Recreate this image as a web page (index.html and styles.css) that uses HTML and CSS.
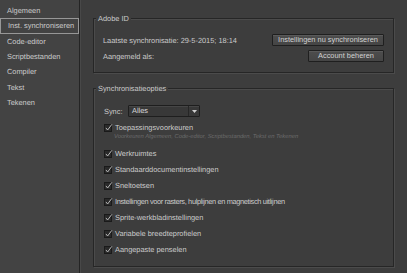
FILE: index.html
```html
<!DOCTYPE html>
<html lang="nl">
<head>
<meta charset="utf-8">
<link rel="stylesheet" href="styles.css">
</head>
<body>
<div class="app">
  <nav class="sidebar">
    <div class="nav-item">Algemeen</div>
    <div class="nav-item selected">Inst. synchroniseren</div>
    <div class="nav-item">Code-editor</div>
    <div class="nav-item">Scriptbestanden</div>
    <div class="nav-item">Compiler</div>
    <div class="nav-item">Tekst</div>
    <div class="nav-item">Tekenen</div>
  </nav>
  <main class="main">
    <section class="group group-id">
      <div class="legend">Adobe ID</div>
      <div class="id-body">
        <div class="id-row">
          <span>Laatste synchronisatie: 29-5-2015; 18:14</span>
          <button class="btn btn-sync">Instellingen nu synchroniseren</button>
        </div>
        <div class="id-row">
          <span>Aangemeld als:</span>
          <button class="btn btn-account">Account beheren</button>
        </div>
      </div>
    </section>
    <section class="group group-opts">
      <div class="legend">Synchronisatieopties</div>
      <div class="sync-row">
        <span class="sync-label">Sync:</span>
        <div class="select">
          <span class="select-value">Alles</span>
          <span class="select-arrow"><svg width="5" height="3" viewBox="0 0 5 3"><path d="M0 0H5L2.5 3Z" fill="#d0d0d0"/></svg></span>
        </div>
      </div>
      <div class="opts">
        <div class="opt-block">
          <div class="opt"><svg class="cb" width="10" height="10" viewBox="0 0 10 10"><rect x="0.5" y="1.5" width="7" height="7" fill="#2a2a2a" stroke="#1a1a1a"/><path d="M1.9 4.9L3.6 7L7.9 1.3" fill="none" stroke="#c4c4c4" stroke-width="0.9"/></svg><span>Toepassingsvoorkeuren</span></div>
          <div class="sub">Voorkeuren Algemeen, Code-editor, Scriptbestanden, Tekst en Tekenen</div>
        </div>
        <div class="opt"><svg class="cb" width="10" height="10" viewBox="0 0 10 10"><rect x="0.5" y="1.5" width="7" height="7" fill="#2a2a2a" stroke="#1a1a1a"/><path d="M1.9 4.9L3.6 7L7.9 1.3" fill="none" stroke="#c4c4c4" stroke-width="0.9"/></svg><span>Werkruimtes</span></div>
        <div class="opt"><svg class="cb" width="10" height="10" viewBox="0 0 10 10"><rect x="0.5" y="1.5" width="7" height="7" fill="#2a2a2a" stroke="#1a1a1a"/><path d="M1.9 4.9L3.6 7L7.9 1.3" fill="none" stroke="#c4c4c4" stroke-width="0.9"/></svg><span>Standaarddocumentinstellingen</span></div>
        <div class="opt"><svg class="cb" width="10" height="10" viewBox="0 0 10 10"><rect x="0.5" y="1.5" width="7" height="7" fill="#2a2a2a" stroke="#1a1a1a"/><path d="M1.9 4.9L3.6 7L7.9 1.3" fill="none" stroke="#c4c4c4" stroke-width="0.9"/></svg><span>Sneltoetsen</span></div>
        <div class="opt"><svg class="cb" width="10" height="10" viewBox="0 0 10 10"><rect x="0.5" y="1.5" width="7" height="7" fill="#2a2a2a" stroke="#1a1a1a"/><path d="M1.9 4.9L3.6 7L7.9 1.3" fill="none" stroke="#c4c4c4" stroke-width="0.9"/></svg><span class="tight">Instellingen voor rasters, hulplijnen en magnetisch uitlijnen</span></div>
        <div class="opt"><svg class="cb" width="10" height="10" viewBox="0 0 10 10"><rect x="0.5" y="1.5" width="7" height="7" fill="#2a2a2a" stroke="#1a1a1a"/><path d="M1.9 4.9L3.6 7L7.9 1.3" fill="none" stroke="#c4c4c4" stroke-width="0.9"/></svg><span>Sprite-werkbladinstellingen</span></div>
        <div class="opt"><svg class="cb" width="10" height="10" viewBox="0 0 10 10"><rect x="0.5" y="1.5" width="7" height="7" fill="#2a2a2a" stroke="#1a1a1a"/><path d="M1.9 4.9L3.6 7L7.9 1.3" fill="none" stroke="#c4c4c4" stroke-width="0.9"/></svg><span>Variabele breedteprofielen</span></div>
        <div class="opt"><svg class="cb" width="10" height="10" viewBox="0 0 10 10"><rect x="0.5" y="1.5" width="7" height="7" fill="#2a2a2a" stroke="#1a1a1a"/><path d="M1.9 4.9L3.6 7L7.9 1.3" fill="none" stroke="#c4c4c4" stroke-width="0.9"/></svg><span>Aangepaste penselen</span></div>
      </div>
    </section>
  </main>
</div>
</body>
</html>
```
FILE: styles.css
```css
* { box-sizing: border-box; }
html, body { margin: 0; padding: 0; }
body {
  width: 407px;
  height: 273px;
  overflow: hidden;
  background: #3d3d3d;
  font-family: "Liberation Sans", Arial, sans-serif;
  font-size: 7.4px;
  color: #cbcbcb;
  text-rendering: geometricPrecision;
}
.app {
  display: flex;
  height: 273px;
}
.sidebar {
  width: 80px;
  flex: none;
  background: #434343;
  border-right: 1px solid #242424;
  padding-top: 3px;
}
.nav-item {
  height: 15.33px;
  line-height: 15.33px;
  padding-left: 7px;
  white-space: nowrap;
}
.nav-item.selected {
  border: 1px solid #979797;
  line-height: 13.33px;
  padding-left: 7px;
}
.main {
  flex: 1;
  border-left: 1px solid #484848;
  padding: 18px 13px 0 12px;
}
.group {
  border: 1px solid #262626;
  box-shadow: inset 1px 1px 0 #4b4b4b, 1px 1px 0 #4b4b4b;
  width: 301px;
  padding: 0 9px 10px 9px;
}
.legend {
  width: fit-content;
  height: 9px;
  line-height: 9px;
  margin: -5px 0 -4px -7px;
  padding: 0 2px;
  background: #3d3d3d;
}
.id-body {
  padding-top: 15px;
  display: flex;
  flex-direction: column;
  gap: 4px;
}
.id-row {
  display: flex;
  justify-content: space-between;
  align-items: center;
  height: 12px;
}
.btn {
  height: 12px;
  padding: 0;
  font: inherit;
  color: #d2d2d2;
  background: linear-gradient(#4d4d4d, #454545);
  border: 1px solid #1f1f1f;
  box-shadow: inset 0 1px 0 #5a5a5a;
  border-radius: 1px;
  line-height: 10px;
}
.btn-sync { width: 112px; }
.btn-account { width: 76px; }
.group-opts {
  margin-top: 15px;
  padding-left: 10px;
  padding-bottom: 11px;
}
.group-opts .legend { margin-left: -8px; }
.sync-row {
  margin-top: 16px;
  display: flex;
  align-items: center;
  height: 12px;
}
.sync-label { width: 24px; }
.select {
  width: 72px;
  height: 12px;
  display: flex;
  border: 1px solid #1e1e1e;
  background: #383838;
  box-shadow: inset 0 1px 0 #464646;
  border-radius: 1px;
}
.select-value {
  flex: 1;
  line-height: 10px;
  padding-left: 3px;
  color: #dadada;
}
.select-arrow {
  width: 11px;
  border-left: 1px solid #262626;
  display: flex;
  align-items: center;
  justify-content: center;
}
.opts {
  margin-top: 6px;
  display: flex;
  flex-direction: column;
  gap: 6px;
}
.opt {
  display: flex;
  align-items: center;
  height: 10px;
  line-height: 10px;
  white-space: nowrap;
}
.tight { letter-spacing: -0.35px; }
.cb {
  flex: none;
  margin-right: 1px;
  margin-top: -1px;
}
.sub {
  height: 10px;
  line-height: 8px;
  padding-left: 10px;
  font-style: italic;
  font-size: 5.8px;
  color: #6c6c6c;
  white-space: nowrap;
}
```
